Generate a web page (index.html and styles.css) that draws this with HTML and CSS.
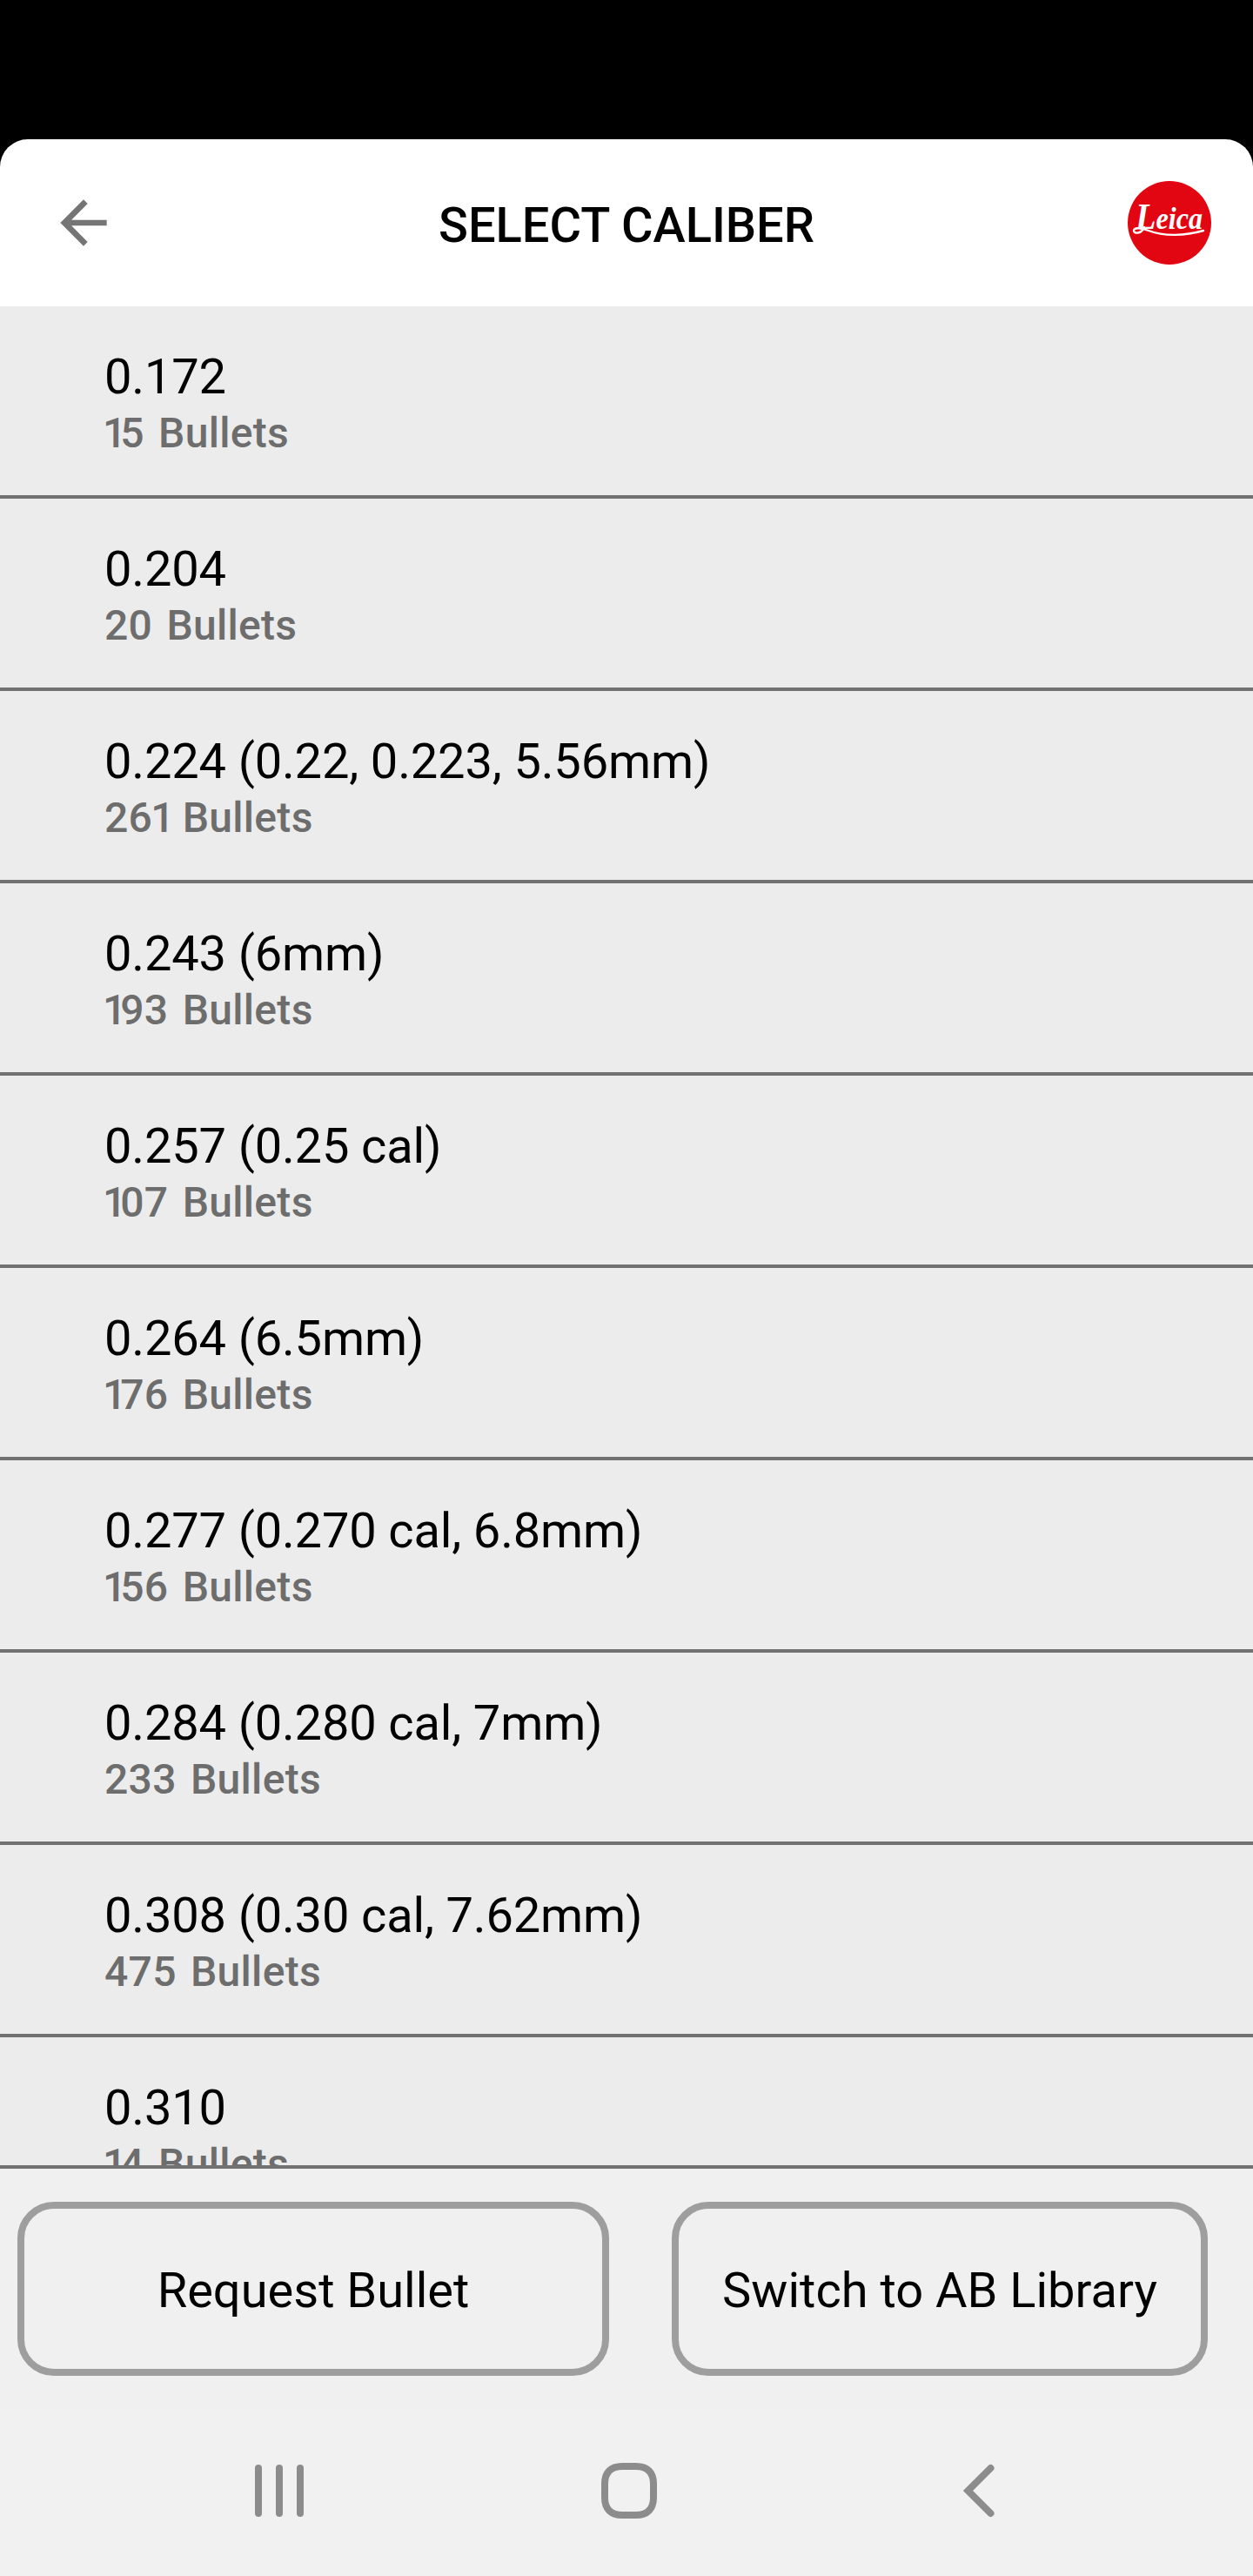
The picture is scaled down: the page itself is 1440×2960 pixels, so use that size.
FILE: index.html
```html
<!DOCTYPE html>
<html lang="en">
<head>
    <meta charset="UTF-8">
    <meta name="viewport" content="width=device-width, initial-scale=1.0">
    <title>Select Caliber</title>
    <link rel="stylesheet" href="styles.css">
</head>
<body>
    <header>
        <a class="back" href="#" aria-label="Back">
            <svg width="80" height="80" viewBox="0 0 24 24">
                <path d="M20 11H7.83l5.59-5.59L12 4l-8 8 8 8 1.41-1.41L7.83 13H20v-2z" fill="#757575"/>
            </svg>
        </a>
        <h1>SELECT CALIBER</h1>
        <svg class="logo" width="96" height="96" viewBox="0 0 96 96">
            <circle cx="48" cy="48" r="48" fill="#e20612"/>
            <text class="logo-text" x="9" y="54.5" textLength="77" lengthAdjust="spacingAndGlyphs"><tspan class="logo-cap">L</tspan>eica</text>
            <!-- swash under the name -->
            <path d="M19 53C16 61 7 61 7 57C7 53 16 54 24 57C42 64 66 63 87 57" fill="none" stroke="#fff" stroke-width="2.4" stroke-linecap="round"/>
        </svg>
    </header>

    <main class="list">
        <div class="row">
            <div class="caliber">0.172</div>
            <div class="count"><span class="one">1</span>5 Bullets</div>
        </div>
        <div class="row">
            <div class="caliber">0.204</div>
            <div class="count">20 Bullets</div>
        </div>
        <div class="row">
            <div class="caliber">0.224 (0.22, 0.223, 5.56mm)</div>
            <div class="count">26<span class="one">1</span> Bullets</div>
        </div>
        <div class="row">
            <div class="caliber">0.243 (6mm)</div>
            <div class="count"><span class="one">1</span>93 Bullets</div>
        </div>
        <div class="row">
            <div class="caliber">0.257 (0.25 cal)</div>
            <div class="count"><span class="one">1</span>07 Bullets</div>
        </div>
        <div class="row">
            <div class="caliber">0.264 (6.5mm)</div>
            <div class="count"><span class="one">1</span>76 Bullets</div>
        </div>
        <div class="row">
            <div class="caliber">0.277 (0.270 cal, 6.8mm)</div>
            <div class="count"><span class="one">1</span>56 Bullets</div>
        </div>
        <div class="row">
            <div class="caliber">0.284 (0.280 cal, 7mm)</div>
            <div class="count">233 Bullets</div>
        </div>
        <div class="row">
            <div class="caliber">0.308 (0.30 cal, 7.62mm)</div>
            <div class="count">475 Bullets</div>
        </div>
        <div class="row">
            <div class="caliber">0.310</div>
            <div class="count"><span class="one">1</span>4 Bullets</div>
        </div>
    </main>

    <div class="buttons">
        <button class="request">Request Bullet</button>
        <button class="switch">Switch to AB Library</button>
    </div>

    <nav>
        <svg width="64" height="64" viewBox="0 0 64 64">
            <path d="M8 6v52M32 6v52M56 6v52" />
        </svg>
        <svg width="64" height="64" viewBox="0 0 64 64">
            <path d="M24 4H40C53 4 60 11 60 24V40C60 53 53 60 40 60H24C11 60 4 53 4 40V24C4 11 11 4 24 4Z"/>
        </svg>
        <svg width="64" height="64" viewBox="0 0 64 64">
            <path d="M45.5 6L19.5 32L45.5 58"/>
        </svg>
    </nav>
</body>
</html>
```

FILE: styles.css
```css
* {
    box-sizing: border-box;
}
body {
    font-family: Roboto, sans-serif;
    margin: 0;
    padding-top: 160px; /* Status bar area */
    height: 2960px;
    background-color: #000;
    color: #000;
    display: flex;
    flex-direction: column;
    overflow: hidden;
}
header {
    display: flex;
    align-items: center;
    justify-content: space-between;
    height: 192px;
    flex-shrink: 0;
    padding: 0 48px 0 56px;
    background-color: #fff;
    border-radius: 32px 32px 0 0;
}
.back {
    width: 88px;
    height: 80px;
}
h1 {
    margin: 5px 0 0;
    font-size: 56px;
    font-weight: 500;
    line-height: 66px;
}
.logo-text {
    font-family: "Liberation Serif", serif;
    font-size: 36px;
    font-weight: bold;
    font-style: italic;
    fill: #fff;
}
.logo-cap {
    font-size: 43px;
}
.list {
    height: 2136px;
    flex-shrink: 0;
    overflow: hidden; /* Last row is cut off by the buttons */
    background-color: #ececec;
}
.row {
    height: 221px;
    padding: 49px 120px 0;
    border-bottom: 4px solid #717171;
}
.caliber {
    font-size: 56px;
    line-height: 64px;
    letter-spacing: -0.15px;
}
.count {
    margin-top: 5px;
    font-size: 48px;
    font-weight: 500;
    line-height: 56px;
    letter-spacing: 0.3px;
    word-spacing: 4px;
    color: #6d6d6d;
}
/* Narrow 1 */
.one {
    margin-left: -2px;
    letter-spacing: -7px;
}
.buttons {
    display: flex;
    height: 280px;
    flex-shrink: 0;
    padding: 38px 52px 0 20px;
    justify-content: space-between;
    align-items: flex-start;
    border-top: 4px solid #717171;
    background-color: #f0f0f0;
}
button {
    height: 200px;
    padding: 4px 0 0;
    border: 8px solid #9e9e9e;
    border-radius: 42px;
    background: none;
    color: #000;
    font-family: inherit;
    font-size: 56px;
}
.request {
    width: 680px;
}
.switch {
    width: 616px;
}
nav {
    display: grid;
    grid-template-columns: repeat(3, 1fr);
    place-items: center;
    flex-grow: 1;
    padding: 0 114px 4px 120px;
    background-color: #f1f1f1;
}
nav path {
    fill: none;
    stroke: #8c8c8c;
    stroke-width: 8;
    stroke-linecap: round;
}
```
